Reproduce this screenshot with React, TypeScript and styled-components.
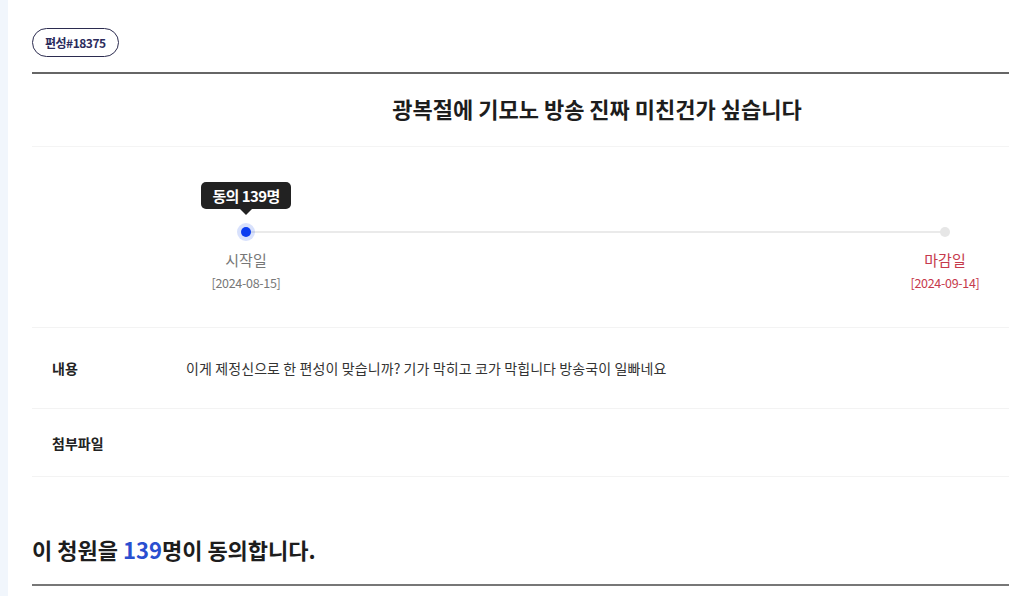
import styled, { createGlobalStyle } from 'styled-components'

const GlobalStyle = createGlobalStyle`
  html, body {
    margin: 0;
    padding: 0;
    background: #fff;
    overflow: hidden;
  }
  body {
    font-family: "Noto Sans CJK KR", "Noto Sans", sans-serif;
    color: #222;
  }
`

export default function App() {
  return (
    <>
      <GlobalStyle />
      <Page>
        <Content>
          <BadgeRow>
            <Badge>편성#18375</Badge>
          </BadgeRow>
          <Title>광복절에 기모노 방송 진짜 미친건가 싶습니다</Title>

          <Timeline>
            <TooltipRow>
              <Tooltip>동의 139명</Tooltip>
            </TooltipRow>
            <Bar>
              <Dot $active />
              <Dot />
            </Bar>
            <DateRow>
              <DateCol>
                <DateLabel>시작일</DateLabel>
                <DateValue>[2024-08-15]</DateValue>
              </DateCol>
              <DateCol $end>
                <DateLabel>마감일</DateLabel>
                <DateValue>[2024-09-14]</DateValue>
              </DateCol>
            </DateRow>
          </Timeline>

          <InfoRow $height={80}>
            <InfoLabel>내용</InfoLabel>
            <InfoValue>이게 제정신으로 한 편성이 맞습니까? 기가 막히고 코가 막힙니다 방송국이 일빠네요</InfoValue>
          </InfoRow>
          <InfoRow $height={67}>
            <InfoLabel>첨부파일</InfoLabel>
            <InfoValue />
          </InfoRow>

          <Summary>
            이 청원을 <Count>139</Count>명이 동의합니다.
          </Summary>
        </Content>
      </Page>
    </>
  )
}

const Page = styled.div`
  display: flex;
  min-height: 596px;
  border-left: 8px solid #f1f6fc;
  padding-left: 24px;
`

const Content = styled.div`
  width: 1130px;
  flex-shrink: 0;
  padding-top: 28px;
`

const BadgeRow = styled.div`
  display: flex;
  padding-bottom: 15px;
  border-bottom: 2px solid #666;
`

const Badge = styled.span`
  display: inline-flex;
  align-items: center;
  justify-content: center;
  box-sizing: border-box;
  height: 29px;
  padding: 0 12px;
  border: 1px solid #2b2b4f;
  border-radius: 15px;
  font-size: 12px;
  font-weight: 700;
  color: #2b2b5c;
  letter-spacing: -0.5px;
`

const Title = styled.h1`
  margin: 0;
  box-sizing: border-box;
  height: 73px;
  padding-bottom: 4px;
  display: flex;
  align-items: center;
  justify-content: center;
  font-size: 22px;
  font-weight: 700;
  color: #1d1d1d;
  border-bottom: 1px solid #f4f4f4;
`

const Timeline = styled.div`
  width: 699px;
  margin-left: 214px;
  padding: 35px 0 35px;
`

const TooltipRow = styled.div`
  display: flex;
`

const Tooltip = styled.div`
  position: relative;
  margin-left: -45px;
  width: 90px;
  height: 27px;
  display: flex;
  align-items: center;
  justify-content: center;
  background: #222;
  color: #fff;
  border-radius: 5px;
  font-size: 15px;
  font-weight: 700;
  letter-spacing: -0.6px;

  &::after {
    content: '';
    position: absolute;
    left: 50%;
    bottom: -6px;
    margin-left: -6px;
    border-left: 6px solid transparent;
    border-right: 6px solid transparent;
    border-top: 6px solid #222;
  }
`

const Bar = styled.div`
  margin: 14px -9px 0;
  height: 18px;
  display: flex;
  align-items: center;
  justify-content: space-between;
  background: linear-gradient(#eaeaea, #eaeaea) center / calc(100% - 18px) 2px no-repeat;
`

const Dot = styled.span<{ $active?: boolean }>`
  width: 18px;
  height: 18px;
  border-radius: 50%;
  display: flex;
  align-items: center;
  justify-content: center;
  background: ${p => (p.$active ? 'rgba(40, 90, 240, 0.18)' : 'transparent')};

  &::before {
    content: '';
    width: 10px;
    height: 10px;
    border-radius: 50%;
    background: ${p => (p.$active ? '#0b3cf0' : '#e6e6e6')};
  }
`

const DateRow = styled.div`
  display: flex;
  justify-content: space-between;
  margin: 9px -50px 0;
`

const DateCol = styled.div<{ $end?: boolean }>`
  width: 100px;
  display: flex;
  flex-direction: column;
  align-items: center;
  color: ${p => (p.$end ? '#c63a4c' : '#777')};
`

const DateLabel = styled.div`
  font-size: 15px;
  line-height: 20px;
`

const DateValue = styled.div`
  margin-top: 4px;
  font-size: 12.5px;
  line-height: 18px;
  letter-spacing: -0.3px;
`

const InfoRow = styled.div<{ $height: number }>`
  display: flex;
  align-items: center;
  height: ${p => p.$height}px;
  border-top: 1px solid #f3f3f3;

  &:last-of-type {
    border-bottom: 1px solid #f3f3f3;
  }
`

const InfoLabel = styled.div`
  width: 134px;
  padding-left: 20px;
  font-size: 14px;
  font-weight: 700;
  color: #222;
`

const InfoValue = styled.div`
  font-size: 14px;
  letter-spacing: 0.1px;
  color: #333;
`

const Summary = styled.h2`
  margin: 56px 0 0;
  padding-bottom: 19px;
  border-bottom: 2px solid #777;
  font-size: 22px;
  font-weight: 700;
  color: #1d1d1d;
`

const Count = styled.span`
  color: #2a4fd0;
`
